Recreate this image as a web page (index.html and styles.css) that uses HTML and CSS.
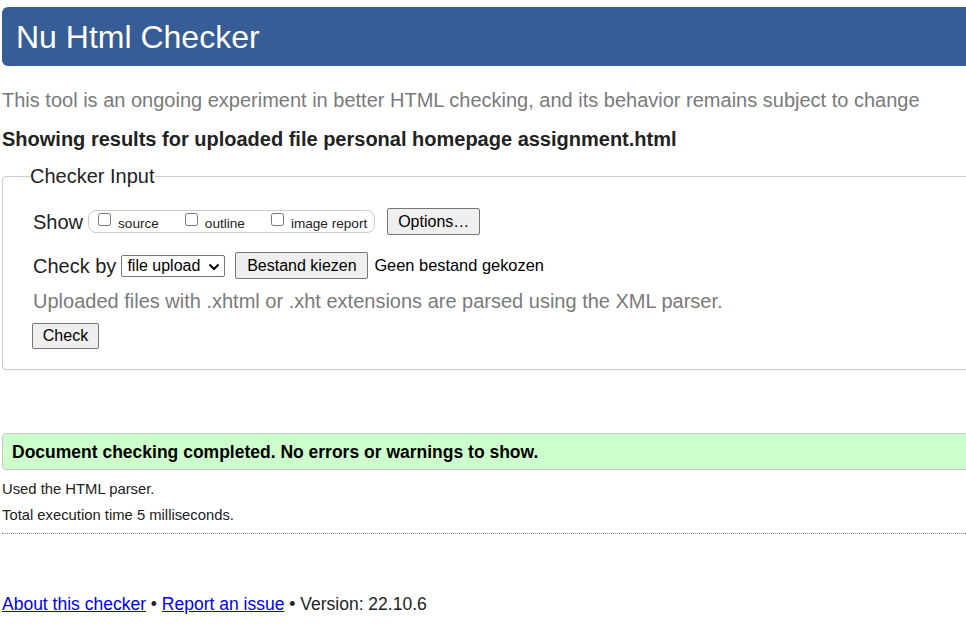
FILE: index.html
```html
<!DOCTYPE html>
<html lang="en">
<head>
<meta charset="utf-8">
<title>Nu Html Checker</title>
<link rel="stylesheet" href="styles.css">
</head>
<body>
<h1 class="banner">Nu Html Checker</h1>
<p class="tagline">This tool is an ongoing experiment in better HTML checking, and its behavior remains subject to change</p>
<p class="results-for">Showing results for uploaded file personal homepage assignment.html</p>
<form class="checker-form">
  <fieldset class="checker-input">
    <legend class="legend">Checker Input</legend>
    <div class="row show-row">
      <span class="row-label">Show</span>
      <span class="options-group">
        <label class="opt"><input type="checkbox" class="cb"><span>source</span></label>
        <label class="opt"><input type="checkbox" class="cb"><span>outline</span></label>
        <label class="opt last"><input type="checkbox" class="cb"><span>image report</span></label>
      </span>
      <button type="button" class="btn options-btn">Options…</button>
    </div>
    <div class="row checkby-row">
      <span class="row-label">Check by</span>
      <span class="select-wrap">
        <select class="select"><option>file upload</option></select>
        <svg class="chevron" width="12" height="8" viewBox="0 0 12 8"><path d="M1.5 1.5 L6 6 L10.5 1.5" fill="none" stroke="#000" stroke-width="2"/></svg>
      </span>
      <button type="button" class="btn file-btn">Bestand kiezen</button>
      <span class="file-status">Geen bestand gekozen</span>
    </div>
    <p class="hint">Uploaded files with .xhtml or .xht extensions are parsed using the XML parser.</p>
    <button type="button" class="btn check-btn">Check</button>
  </fieldset>
</form>
<p class="success">Document checking completed. No errors or warnings to show.</p>
<p class="details">Used the HTML parser.</p>
<p class="details">Total execution time 5 milliseconds.</p>
<hr class="divider">
<p class="footer"><a href="#">About this checker</a> • <a href="#">Report an issue</a> • Version: 22.10.6</p>
</body>
</html>
```
FILE: styles.css
```css
html {
  overflow-x: hidden;
  background: #fff;
}
body {
  margin: 7px -12px 0 2px;
  font-family: "Liberation Sans", Arial, sans-serif;
  color: #222;
}
.banner {
  margin: 0;
  height: 59px;
  line-height: 60px;
  padding-left: 14px;
  background: #365d95;
  color: #fff;
  font-size: 32px;
  font-weight: normal;
  border-radius: 6px;
}
.tagline {
  margin: 22px 0 0;
  font-size: 20px;
  line-height: 24px;
  color: #7a7a7a;
}
.results-for {
  margin: 15px 0 0;
  font-size: 20px;
  line-height: 24px;
  font-weight: bold;
}
.checker-form {
  margin-top: 13px;
}
.checker-input {
  margin: 0;
  border: 1px solid #ccc;
  border-radius: 4px;
  padding: 20px 30px 20px 30px;
  min-width: 0;
}
.legend {
  padding: 0;
  margin-left: -3px;
  font-size: 20px;
  line-height: 24px;
  color: #222;
}
.row {
  display: flex;
  align-items: center;
}
.row-label {
  font-size: 20px;
  line-height: 24px;
}
.show-row {
  height: 27px;
}
.options-group {
  display: flex;
  align-items: flex-start;
  margin-left: 5px;
  height: 21px;
  padding-left: 8px;
  padding-right: 7px;
  border: 1px solid #ccc;
  border-radius: 8px;
  font-size: 13.6px;
  line-height: 17px;
}
.opt {
  display: flex;
  align-items: flex-start;
  margin-right: 25px;
  padding-top: 1px;
}
.opt.last {
  margin-right: 0;
}
.opt span {
  padding-top: 3px;
}
.cb {
  margin: 1px 7px 0 1px;
  width: 13px;
  height: 13px;
}
.btn {
  font-family: "Liberation Sans", Arial, sans-serif;
  font-size: 16px;
  color: #000;
  background: #efefef;
  border: 1px solid #767676;
  border-radius: 2px;
  padding: 0;
  height: 27px;
}
.options-btn {
  margin-left: 12px;
  width: 93px;
}
.checkby-row {
  margin-top: 17px;
  height: 27px;
}
.select-wrap {
  position: relative;
  margin-left: 5px;
  display: inline-block;
}
.select {
  -webkit-appearance: none;
  appearance: none;
  font-family: "Liberation Sans", Arial, sans-serif;
  font-size: 16px;
  color: #000;
  background: #fff;
  border: 1px solid #767676;
  border-radius: 2px;
  height: 22px;
  width: 104px;
  padding: 0 0 0 5px;
  line-height: 20px;
  display: block;
}
.chevron {
  position: absolute;
  right: 5px;
  top: 8px;
  pointer-events: none;
}
.file-btn {
  margin-left: 10px;
  width: 133px;
}
.file-status {
  margin-left: 6px;
  font-size: 16.4px;
  color: #000;
}
.hint {
  margin: 10px 0 0;
  font-size: 20px;
  line-height: 24px;
  color: #7a7a7a;
}
.check-btn {
  margin-top: 10px;
  margin-left: -1px;
  width: 67px;
  height: 26px;
  display: block;
}
.success {
  margin: 63px 0 0;
  height: 35px;
  line-height: 36px;
  padding-left: 9px;
  background: #ccffcc;
  border: 1px solid #c8c8c8;
  border-radius: 4px;
  font-size: 17.5px;
  font-weight: bold;
  color: #000;
}
.details {
  margin: 11px 0 0;
  font-size: 14.8px;
  line-height: 17px;
}
.details + .details {
  margin-top: 9px;
}
.divider {
  margin: 9px 0 0;
  border: 0;
  border-top: 1px dotted #888;
  height: 0;
}
.footer {
  margin: 59px 0 0;
  font-size: 17.5px;
  line-height: 22px;
}
.footer a {
  color: #0000ee;
}
```
